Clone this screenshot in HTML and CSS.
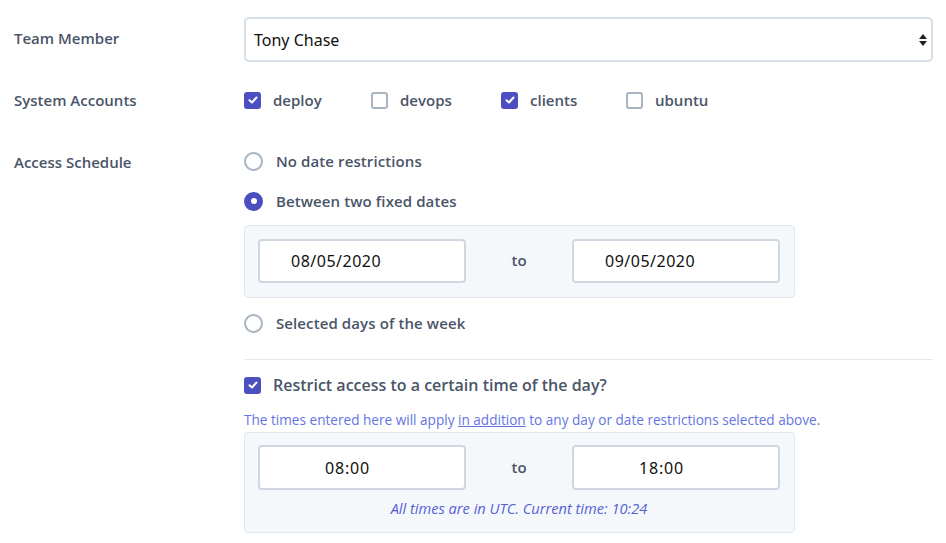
FILE: index.html
```html
<!DOCTYPE html>
<html>
<head>
<meta charset="utf-8">
<link rel="stylesheet" href="styles.css">
</head>
<body>
<div class="form">
  <div class="row row-member">
    <div class="label">Team Member</div>
    <div class="control">
      <div class="select">
        <span class="select-value">Tony Chase</span>
        <span class="select-arrows"><span class="up"></span><span class="down"></span></span>
      </div>
    </div>
  </div>

  <div class="row row-accounts">
    <div class="label">System Accounts</div>
    <div class="control accounts">
      <label class="opt acc-deploy"><span class="cb checked"><svg viewBox="0 0 12 12"><path d="M2.5 6.2 L5 8.5 L9.5 3.5"/></svg></span>deploy</label>
      <label class="opt acc-devops"><span class="cb"></span>devops</label>
      <label class="opt acc-clients"><span class="cb checked"><svg viewBox="0 0 12 12"><path d="M2.5 6.2 L5 8.5 L9.5 3.5"/></svg></span>clients</label>
      <label class="opt"><span class="cb"></span>ubuntu</label>
    </div>
  </div>

  <div class="row row-schedule">
    <div class="label">Access Schedule</div>
    <div class="control schedule">
      <label class="opt radio-row"><span class="rb"></span>No date restrictions</label>
      <label class="opt radio-row r2"><span class="rb checked"></span>Between two fixed dates</label>
      <div class="panel date-panel">
        <div class="pair">
          <div class="field date">08/05/2020</div>
          <div class="to">to</div>
          <div class="field date">09/05/2020</div>
        </div>
      </div>
      <label class="opt radio-row r3"><span class="rb"></span>Selected days of the week</label>
      <div class="divider"></div>
      <label class="opt restrict"><span class="cb checked"><svg viewBox="0 0 12 12"><path d="M2.5 6.2 L5 8.5 L9.5 3.5"/></svg></span>Restrict access to a certain time of the day?</label>
      <div class="note">The times entered here will apply <u>in addition</u> to any day or date restrictions selected above.</div>
      <div class="panel time-panel">
        <div class="pair">
          <div class="field time">08:00</div>
          <div class="to">to</div>
          <div class="field time">18:00</div>
        </div>
        <div class="utc">All times are in UTC. Current time: 10:24</div>
      </div>
    </div>
  </div>
</div>
</body>
</html>
```

FILE: styles.css
```css
html, body {
  margin: 0;
  padding: 0;
  background: #ffffff;
}
body {
  font-family: "Open Sans", "Lato", sans-serif;
  color: #4a5568;
  font-size: 15px;
}
.form {
  padding: 17px 13px 0 14px;
}
.row {
  display: grid;
  grid-template-columns: 230px 1fr;
}
.label {
  font-weight: 600;
  font-size: 15px;
  line-height: 20px;
  color: #4a5568;
}
.row-member .label {
  padding-top: 11px;
}
.select {
  height: 45px;
  box-sizing: border-box;
  border: 2px solid #d5dde6;
  border-radius: 5px;
  display: flex;
  align-items: center;
  justify-content: space-between;
  padding: 0 4px 0 8px;
  color: #111;
}
.select-value {
  font-family: "Noto Sans", sans-serif;
  font-size: 16px;
}
.select-arrows {
  display: flex;
  flex-direction: column;
  gap: 2px;
  align-items: center;
}
.select-arrows .up {
  width: 0; height: 0;
  border-left: 4px solid transparent;
  border-right: 4px solid transparent;
  border-bottom: 5px solid #222;
}
.select-arrows .down {
  width: 0; height: 0;
  border-left: 4px solid transparent;
  border-right: 4px solid transparent;
  border-top: 5px solid #222;
}
.row-accounts {
  margin-top: 28px;
}
.accounts {
  display: flex;
}
.opt {
  display: flex;
  align-items: center;
  height: 20px;
  font-weight: 600;
  font-size: 15px;
  color: #4a5568;
}
.acc-deploy { width: 127px; }
.acc-devops { width: 130px; }
.acc-clients { width: 125px; }
.cb {
  width: 17px;
  height: 17px;
  box-sizing: border-box;
  border: 2px solid #a9b5c3;
  border-radius: 3px;
  margin-right: 12px;
  display: flex;
  align-items: center;
  justify-content: center;
  flex: none;
}
.cb.checked {
  background: #4c4fbf;
  border-color: #4c4fbf;
}
.cb svg {
  width: 12px;
  height: 12px;
  fill: none;
  stroke: #fff;
  stroke-width: 2;
  stroke-linecap: round;
  stroke-linejoin: round;
}
.row-schedule {
  margin-top: 41px;
}
.row-schedule .label {
  line-height: 22px;
}
.schedule {
  display: flex;
  flex-direction: column;
}
.rb {
  width: 19px;
  height: 19px;
  box-sizing: border-box;
  border: 2px solid #a9b5c3;
  border-radius: 50%;
  margin-right: 13px;
  flex: none;
  display: flex;
  align-items: center;
  justify-content: center;
}
.rb.checked {
  background: #4c4fbf;
  border-color: #4c4fbf;
}
.rb.checked::after {
  content: "";
  width: 6px;
  height: 6px;
  border-radius: 50%;
  background: #fff;
}
.radio-row { letter-spacing: 0.1px; }
.r2 { margin-top: 20px; }
.panel {
  width: 551px;
  box-sizing: border-box;
  background: #f5f8fb;
  border: 1px solid #e1e7ee;
  border-radius: 4px;
  padding: 13px 14px 14px 13px;
}
.date-panel {
  margin-top: 14px;
  height: 73px;
}
.pair {
  display: flex;
  align-items: center;
}
.field {
  width: 208px;
  height: 44px;
  box-sizing: border-box;
  background: #fff;
  border: 2px solid #cfd8e2;
  border-radius: 4px;
  display: flex;
  align-items: center;
  font-family: "Noto Sans", sans-serif;
  font-size: 16px;
  color: #111;
}
.field.date { padding-left: 31px; letter-spacing: 0.5px; }
.field.time { padding-left: 65px; height: 45px; letter-spacing: 0.8px; }
.to {
  width: 106px;
  text-align: center;
  font-weight: 600;
  font-size: 15px;
  color: #4a5568;
}
.date-panel .to { padding-bottom: 2px; }
.r3 { margin-top: 15px; }
.divider {
  margin-top: 26px;
  height: 1px;
  background: #e5e9ee;
}
.restrict { margin-top: 15px; font-size: 16px; }
.note {
  margin-top: 17px;
  font-size: 13.6px;
  line-height: 16px;
  color: #6574e3;
}
.note u {
  text-decoration: underline;
}
.time-panel {
  margin-top: 4px;
  height: 101px;
  padding-top: 12px;
}
.time-panel .to { padding-bottom: 2px; }
.utc {
  margin-top: 10px;
  text-align: center;
  font-style: italic;
  font-size: 14.6px;
  line-height: 16px;
  color: #5560d6;
}
```
